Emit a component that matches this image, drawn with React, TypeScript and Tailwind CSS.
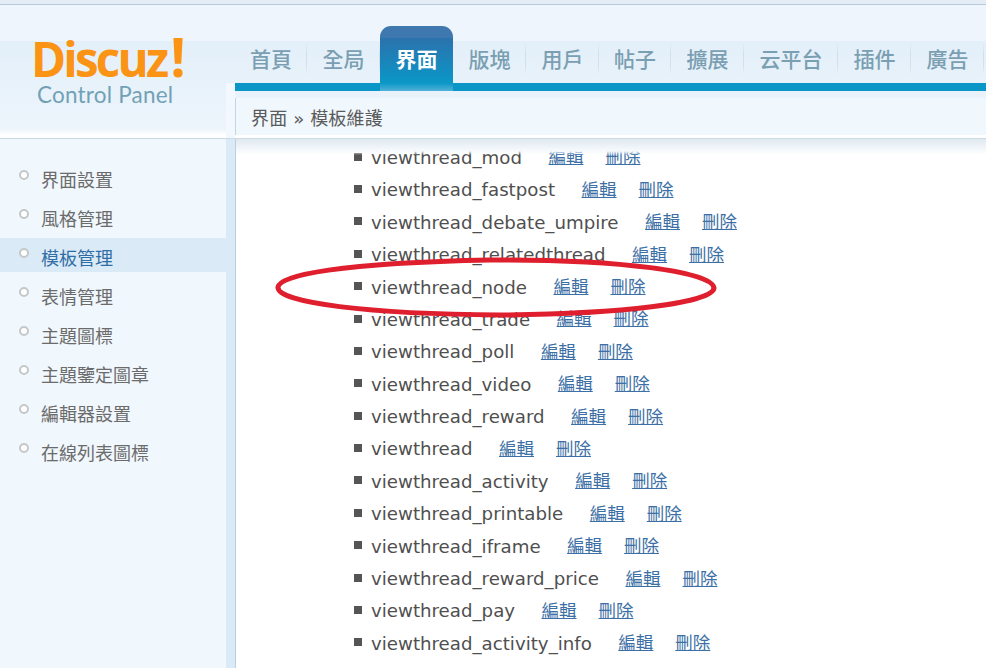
const navItems = [
  { label: "首頁", width: "w-[72px]" },
  { label: "全局", width: "w-[73px]" },
  { label: "界面", width: "w-[73px]", active: true },
  { label: "版塊", width: "w-[73px]" },
  { label: "用戶", width: "w-[73px]" },
  { label: "帖子", width: "w-[72px]" },
  { label: "擴展", width: "w-[73px]" },
  { label: "云平台", width: "w-[94px]" },
  { label: "插件", width: "w-[73px]" },
  { label: "廣告", width: "w-[73px]" },
];

const sideItems = ["界面設置", "風格管理", "模板管理", "表情管理", "主題圖標", "主題鑒定圖章", "編輯器設置", "在線列表圖標"];

const templates = [
  "viewthread_mod",
  "viewthread_fastpost",
  "viewthread_debate_umpire",
  "viewthread_relatedthread",
  "viewthread_node",
  "viewthread_trade",
  "viewthread_poll",
  "viewthread_video",
  "viewthread_reward",
  "viewthread",
  "viewthread_activity",
  "viewthread_printable",
  "viewthread_iframe",
  "viewthread_reward_price",
  "viewthread_pay",
  "viewthread_activity_info",
];

const App = () => {
  return (
    <div className="relative flex h-[668px] w-[986px] flex-col overflow-hidden bg-white font-['DejaVu_Sans','Noto_Sans_CJK_TC',sans-serif]">
      {/* Top stripe */}
      <div className="h-[5px] shrink-0 border-b border-[#b9c9dc] bg-[#e4ecf6]" />

      {/* Header */}
      <header className="flex h-[134px] shrink-0 border-b border-[#cbd9e2] bg-[linear-gradient(to_bottom,#eef5fc_36px,#e3eff9_36px,#edf5fc_124px,#ffffff_130px)]">
        <div className="relative w-[235px] shrink-0">
          <div className="mt-[31px] h-[40px] pl-[31px] font-['Open_Sans',sans-serif] text-[47.5px] leading-[40px] font-bold tracking-[-2.8px] whitespace-nowrap text-[#fb9414]">
            Discuz<span className="ml-[4px] text-[54px] leading-[40px]">!</span>
          </div>
          <div className="mt-[7px] pl-[37px] font-['Lato',sans-serif] text-[22.5px] leading-[24px] tracking-[0.2px] text-[#72a1b5]">
            Control Panel
          </div>
          <span className="absolute bottom-0 right-0 top-[78px] w-[9px] bg-[#f2f8fd]" />
        </div>
        <div className="flex min-w-0 flex-1 flex-col">
          <nav className="relative z-10 flex h-[78px] shrink-0 items-end">
            {navItems.map((item) =>
              item.active ? (
                <div
                  key={item.label}
                  className={`-mb-2 flex h-[65px] shrink-0 items-start justify-center rounded-t-[11px] bg-[linear-gradient(to_bottom,#3f78ae_12px,#2b72ad_12px,#0a97c7_57px,#52b1d6_65px)] pt-[17px] text-[21px] leading-[34px] font-bold text-white ${item.width}`}
                >
                  {item.label}
                </div>
              ) : (
                <div
                  key={item.label}
                  className={`flex h-[40px] shrink-0 items-center justify-center bg-[linear-gradient(to_bottom,#d0e0ea00,#d0e0ea_25%,#d0e0ea_55%,#d0e0ea00_78%)] bg-[length:1px_100%] bg-right bg-no-repeat pb-[5px] text-[21px] font-medium text-[#7b9fb2] ${item.width}`}
                >
                  {item.label}
                </div>
              ),
            )}
          </nav>
          <div className="h-2 shrink-0 bg-[#0a97c7]" />
          <div className="mt-[7px] flex h-[37px] shrink-0 items-center border-l border-[#c3d6e3] bg-[#f0f7fd] pl-[15px] pt-[3px] text-[18px] tracking-[0.15px] text-[#5a5a5a]">
            界面 » 模板維護
          </div>
        </div>
      </header>

      {/* Body */}
      <div className="flex min-h-0 flex-1">
        <aside className="flex w-[236px] shrink-0 border-r border-[#b9d0e0]">
          <ul className="w-[226px] bg-[#f0f7fd] pt-[21px]">
            {sideItems.map((label, i) => (
              <li
                key={label}
                className={`mb-[5px] flex h-[34px] items-center pl-[19px] pt-[6px] text-[18px] ${i === 2 ? "bg-[#dbeaf7] text-[#2f6ea5]" : "text-[#6b6b6b]"}`}
              >
                <span className="mb-[10px] mr-[12px] h-[10px] w-[10px] shrink-0 rounded-full border-2 border-[#c4c8c8] bg-white" />
                {label}
              </li>
            ))}
          </ul>
          <div className="flex-1 bg-[#dbeaf7]" />
        </aside>
        <main className="relative min-w-0 flex-1 overflow-hidden">
          <div className="absolute inset-x-0 top-0 z-10 h-[16px] bg-[linear-gradient(to_bottom,#dfe9ef,#f7fafd_12px,#f7fafd00_16px)]" />
          <ul className="pl-[118px] pt-[2.4px]">
            {templates.map((name) => (
              <li key={name} className="flex h-[32.4px] items-center text-[18.2px] text-[#4f4f4f]">
                <span className="mb-[2px] mr-[9px] h-2 w-2 shrink-0 bg-[#555555]" />
                <span>{name}</span>
                <a className="ml-[26.5px] text-[17.5px] text-[#3c6fa5] underline" href="#">
                  編輯
                </a>
                <a className="ml-[22px] text-[17.5px] text-[#3c6fa5] underline" href="#">
                  刪除
                </a>
              </li>
            ))}
          </ul>
        </main>
      </div>

      {/* Hand-drawn annotation around the node row */}
      <svg className="pointer-events-none absolute left-0 top-0" width="986" height="668" viewBox="0 0 986 668">
        <path
          d="M278 287C280 275 340 263 490 260C620 259 713 272 714 288C713 303 620 314 500 315C370 314 276 303 278 287Z"
          fill="none"
          stroke="#df1f2d"
          strokeWidth="5"
        />
      </svg>
    </div>
  );
};

export default App;
